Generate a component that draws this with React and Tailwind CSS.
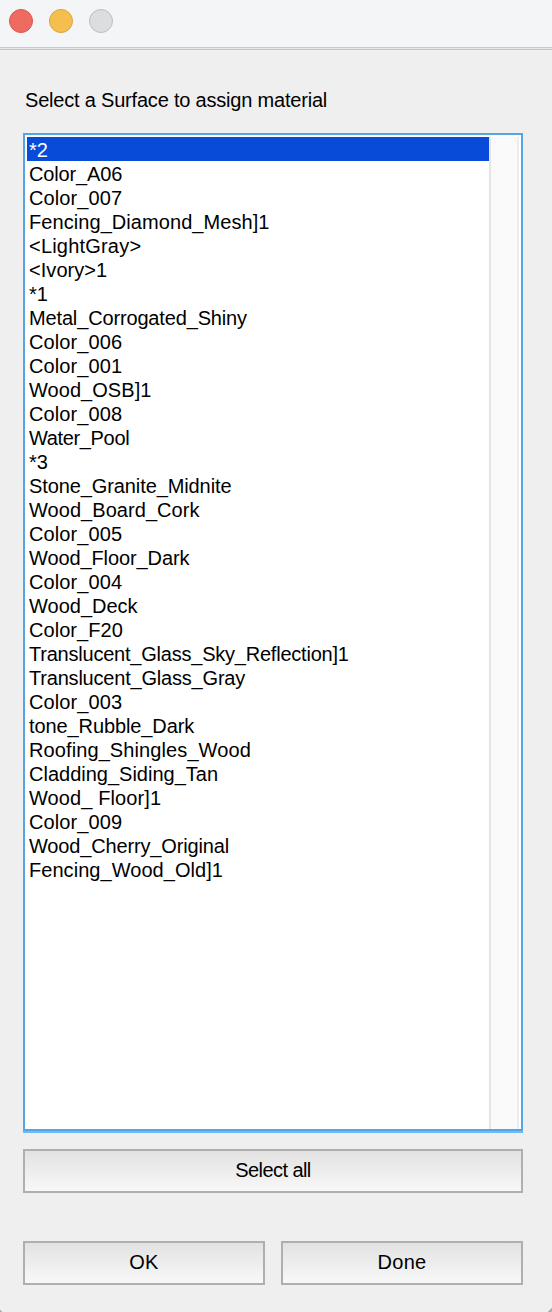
const surfaces = [
  ['*2', 'tracking-[0px]'],
  ['Color_A06', 'tracking-[-0.15px]'],
  ['Color_007', 'tracking-[0.1px]'],
  ['Fencing_Diamond_Mesh]1', 'tracking-[0.07px]'],
  ['<LightGray>', 'tracking-[0.2px]'],
  ['<Ivory>1', 'tracking-[0.05px]'],
  ['*1', 'tracking-[0px]'],
  ['Metal_Corrogated_Shiny', 'tracking-[-0.15px]'],
  ['Color_006', 'tracking-[0.1px]'],
  ['Color_001', 'tracking-[0.1px]'],
  ['Wood_OSB]1', 'tracking-[0.05px]'],
  ['Color_008', 'tracking-[0.1px]'],
  ['Water_Pool', 'tracking-[-0.35px]'],
  ['*3', 'tracking-[0px]'],
  ['Stone_Granite_Midnite', 'tracking-[-0.1px]'],
  ['Wood_Board_Cork', 'tracking-[0.05px]'],
  ['Color_005', 'tracking-[0.1px]'],
  ['Wood_Floor_Dark', 'tracking-[-0.1px]'],
  ['Color_004', 'tracking-[0.1px]'],
  ['Wood_Deck', 'tracking-[0px]'],
  ['Color_F20', 'tracking-[0.05px]'],
  ['Translucent_Glass_Sky_Reflection]1', 'tracking-[-0.22px]'],
  ['Translucent_Glass_Gray', 'tracking-[-0.2px]'],
  ['Color_003', 'tracking-[0.1px]'],
  ['tone_Rubble_Dark', 'tracking-[-0.1px]'],
  ['Roofing_Shingles_Wood', 'tracking-[0.1px]'],
  ['Cladding_Siding_Tan', 'tracking-[0px]'],
  ['Wood_ Floor]1', 'tracking-[0.1px]'],
  ['Color_009', 'tracking-[0.1px]'],
  ['Wood_Cherry_Original', 'tracking-[-0.15px]'],
  ['Fencing_Wood_Old]1', 'tracking-[0.05px]'],
];

function Button({ className, children }) {
  return (
    <button className={`flex h-11 flex-1 items-center justify-center border-2 border-[#afafaf] bg-linear-to-b from-[#e2e2e2] to-[#f8f8f8] pb-0.5 ${className}`}>
      {children}
    </button>
  );
}

function Grip({ className, d }) {
  return (
    <svg className={className} width="4" height="4" viewBox="0 0 4 4">
      <path d={d} fill="#b0b0b0" />
    </svg>
  );
}

export default function App() {
  return (
    <div className="relative flex h-[1312px] w-[552px] flex-col bg-[#efefef] font-['Liberation_Sans',Arial,sans-serif] text-[20px] leading-6 text-black">
      <header className="flex h-[50px] shrink-0 gap-4 border-b border-[#c3c3c4] bg-[#f3f5f7] pt-[9px] pl-[9px] shadow-[inset_0_-1px_0_#e6e7e8,inset_0_-2px_0_#c9cacc]">
        <span className="size-6 rounded-full border border-[#d9574c] bg-[#ed6b60]" />
        <span className="size-6 rounded-full border border-[#dba33b] bg-[#f5bf50]" />
        <span className="size-6 rounded-full border border-[#bdbec0] bg-[#dcdddf]" />
      </header>
      <main className="flex flex-col pt-[38px] pr-[29px] pl-[23px]">
        <label className="mb-[21px] pl-0.5 tracking-[-0.2px]">Select a Surface to assign material</label>
        <div className="flex h-[1000px] flex-col bg-[#6cb9fc] pb-0.5">
          <div className="flex flex-1 border-2 border-[#55a5e5] bg-white pt-0.5 pr-0.5 pl-0.5">
            <ul className="flex-1">
              {surfaces.map(([name, tracking], i) => (
                <li key={name} className={`h-6 pt-px pl-0.5 ${tracking} ${i === 0 ? 'bg-[#074bd8] text-white' : ''}`}>
                  {name}
                </li>
              ))}
            </ul>
            <div className="w-[30px] border-r-2 border-l-2 border-r-[#ececec] border-l-[#e5e5e5] bg-[#fafafa]" />
          </div>
        </div>
        <div className="mt-4 flex"><Button className="tracking-[-0.58px]">Select all</Button></div>
        <div className="mt-12 flex gap-4">
          <Button className="tracking-[0.3px]">OK</Button>
          <Button className="tracking-[0.3px]">Done</Button>
        </div>
      </main>
      <Grip className="absolute bottom-0 left-0" d="M0 2h1v1h1v1H0z" />
      <Grip className="absolute right-0 bottom-0" d="M3 0h1v4H0V3h1V2h1V1h1z" />
    </div>
  );
}
